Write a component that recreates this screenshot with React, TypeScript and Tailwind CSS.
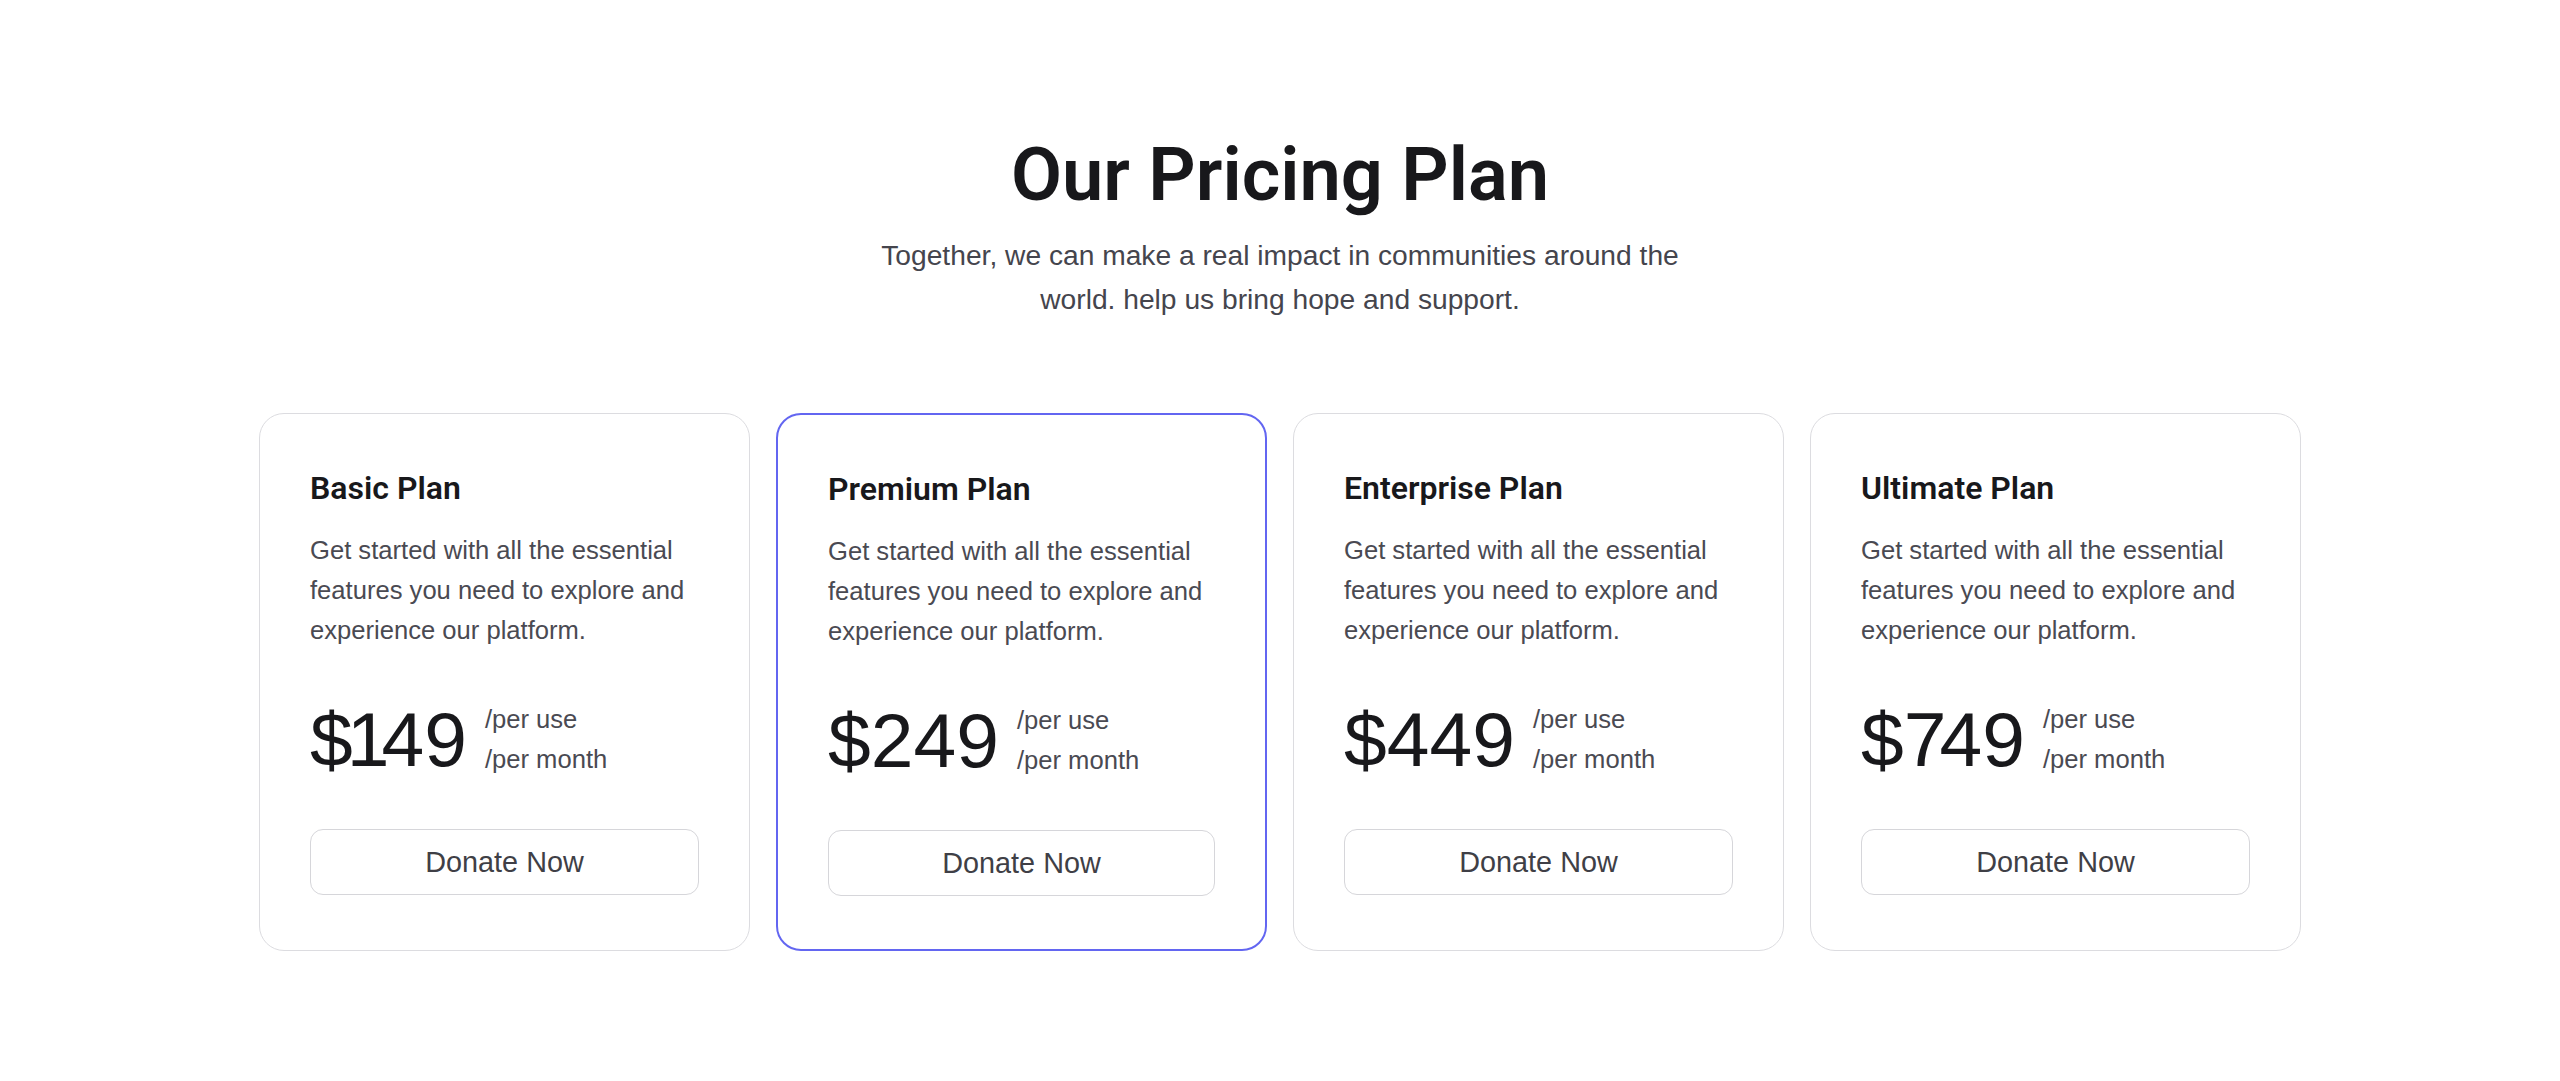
import React from "react";

type Plan = {
  name: string;
  price: string;
  featured?: boolean;
};

const plans: Plan[] = [
  { name: "Basic Plan", price: "$149" },
  { name: "Premium Plan", price: "$249", featured: true },
  { name: "Enterprise Plan", price: "$449" },
  { name: "Ultimate Plan", price: "$749" },
];

function Price({ value }: { value: string }) {
  const chars = value.split("");
  return (
    <span className="text-[76.8px] leading-[76.8px] text-[#18181b] font-['Liberation_Sans',Arial,sans-serif] whitespace-nowrap">
      {chars.map((ch, i) => {
        const next = chars[i + 1];
        if (ch === "$" && next === "1") {
          return (
            <span key={i} className="tracking-[-6px]">
              $
            </span>
          );
        }
        if (ch === "1") {
          return (
            <span key={i} className="tracking-[-8px]">
              1
            </span>
          );
        }
        if (ch === "7") {
          return (
            <span key={i} className="tracking-[-7px]">
              7
            </span>
          );
        }
        return <span key={i}>{ch}</span>;
      })}
    </span>
  );
}

function PlanCard({ plan }: { plan: Plan }) {
  return (
    <div
      className={
        plan.featured
          ? "flex flex-col rounded-[25px] border-2 border-[#6366f1] bg-white px-[50px] pt-[52px] pb-[53px]"
          : "flex flex-col rounded-[25px] border border-[#dcdce0] bg-white px-[50px] pt-[52px] pb-[53px]"
      }
    >
      <h3 className="text-[32px] leading-[44px] font-semibold text-[#18181b] font-['Roboto',sans-serif]">
        {plan.name}
      </h3>
      <p className="mt-[20px] text-[25.6px] leading-[40px] text-[#4a4a52] font-['Liberation_Sans',Arial,sans-serif]">
        Get started with all the essential features you need to explore and
        experience our platform.
      </p>
      <div className="mt-[49px] flex items-center gap-[18px]">
        <Price value={plan.price} />
        <div className="flex flex-col text-[25.6px] leading-[40px] text-[#4a4a52] font-['Liberation_Sans',Arial,sans-serif]">
          <span>/per use</span>
          <span>/per month</span>
        </div>
      </div>
      <button
        type="button"
        className="mt-[50px] w-full rounded-[13px] border border-[#d6d6da] bg-white py-[12px] text-[28.8px] leading-[40px] text-[#3f3f46] font-['Liberation_Sans',Arial,sans-serif]"
      >
        Donate Now
      </button>
    </div>
  );
}

export default function App() {
  return (
    <div className="min-h-screen w-full bg-white pt-[137px] font-['Liberation_Sans',Arial,sans-serif]">
      <div className="flex flex-col items-center text-center">
        <h1 className="text-[74px] leading-[76px] font-semibold text-[#18181b] font-['Roboto',sans-serif]">
          Our Pricing Plan
        </h1>
        <p className="mt-[20px] max-w-[860px] text-[28.2px] leading-[44px] text-[#45454d]">
          Together, we can make a real impact in communities around the world.
          help us bring hope and support.
        </p>
      </div>
      <div className="mx-auto mt-[92px] grid w-[2042px] grid-cols-4 gap-[26px]">
        {plans.map((p) => (
          <PlanCard key={p.name} plan={p} />
        ))}
      </div>
    </div>
  );
}
